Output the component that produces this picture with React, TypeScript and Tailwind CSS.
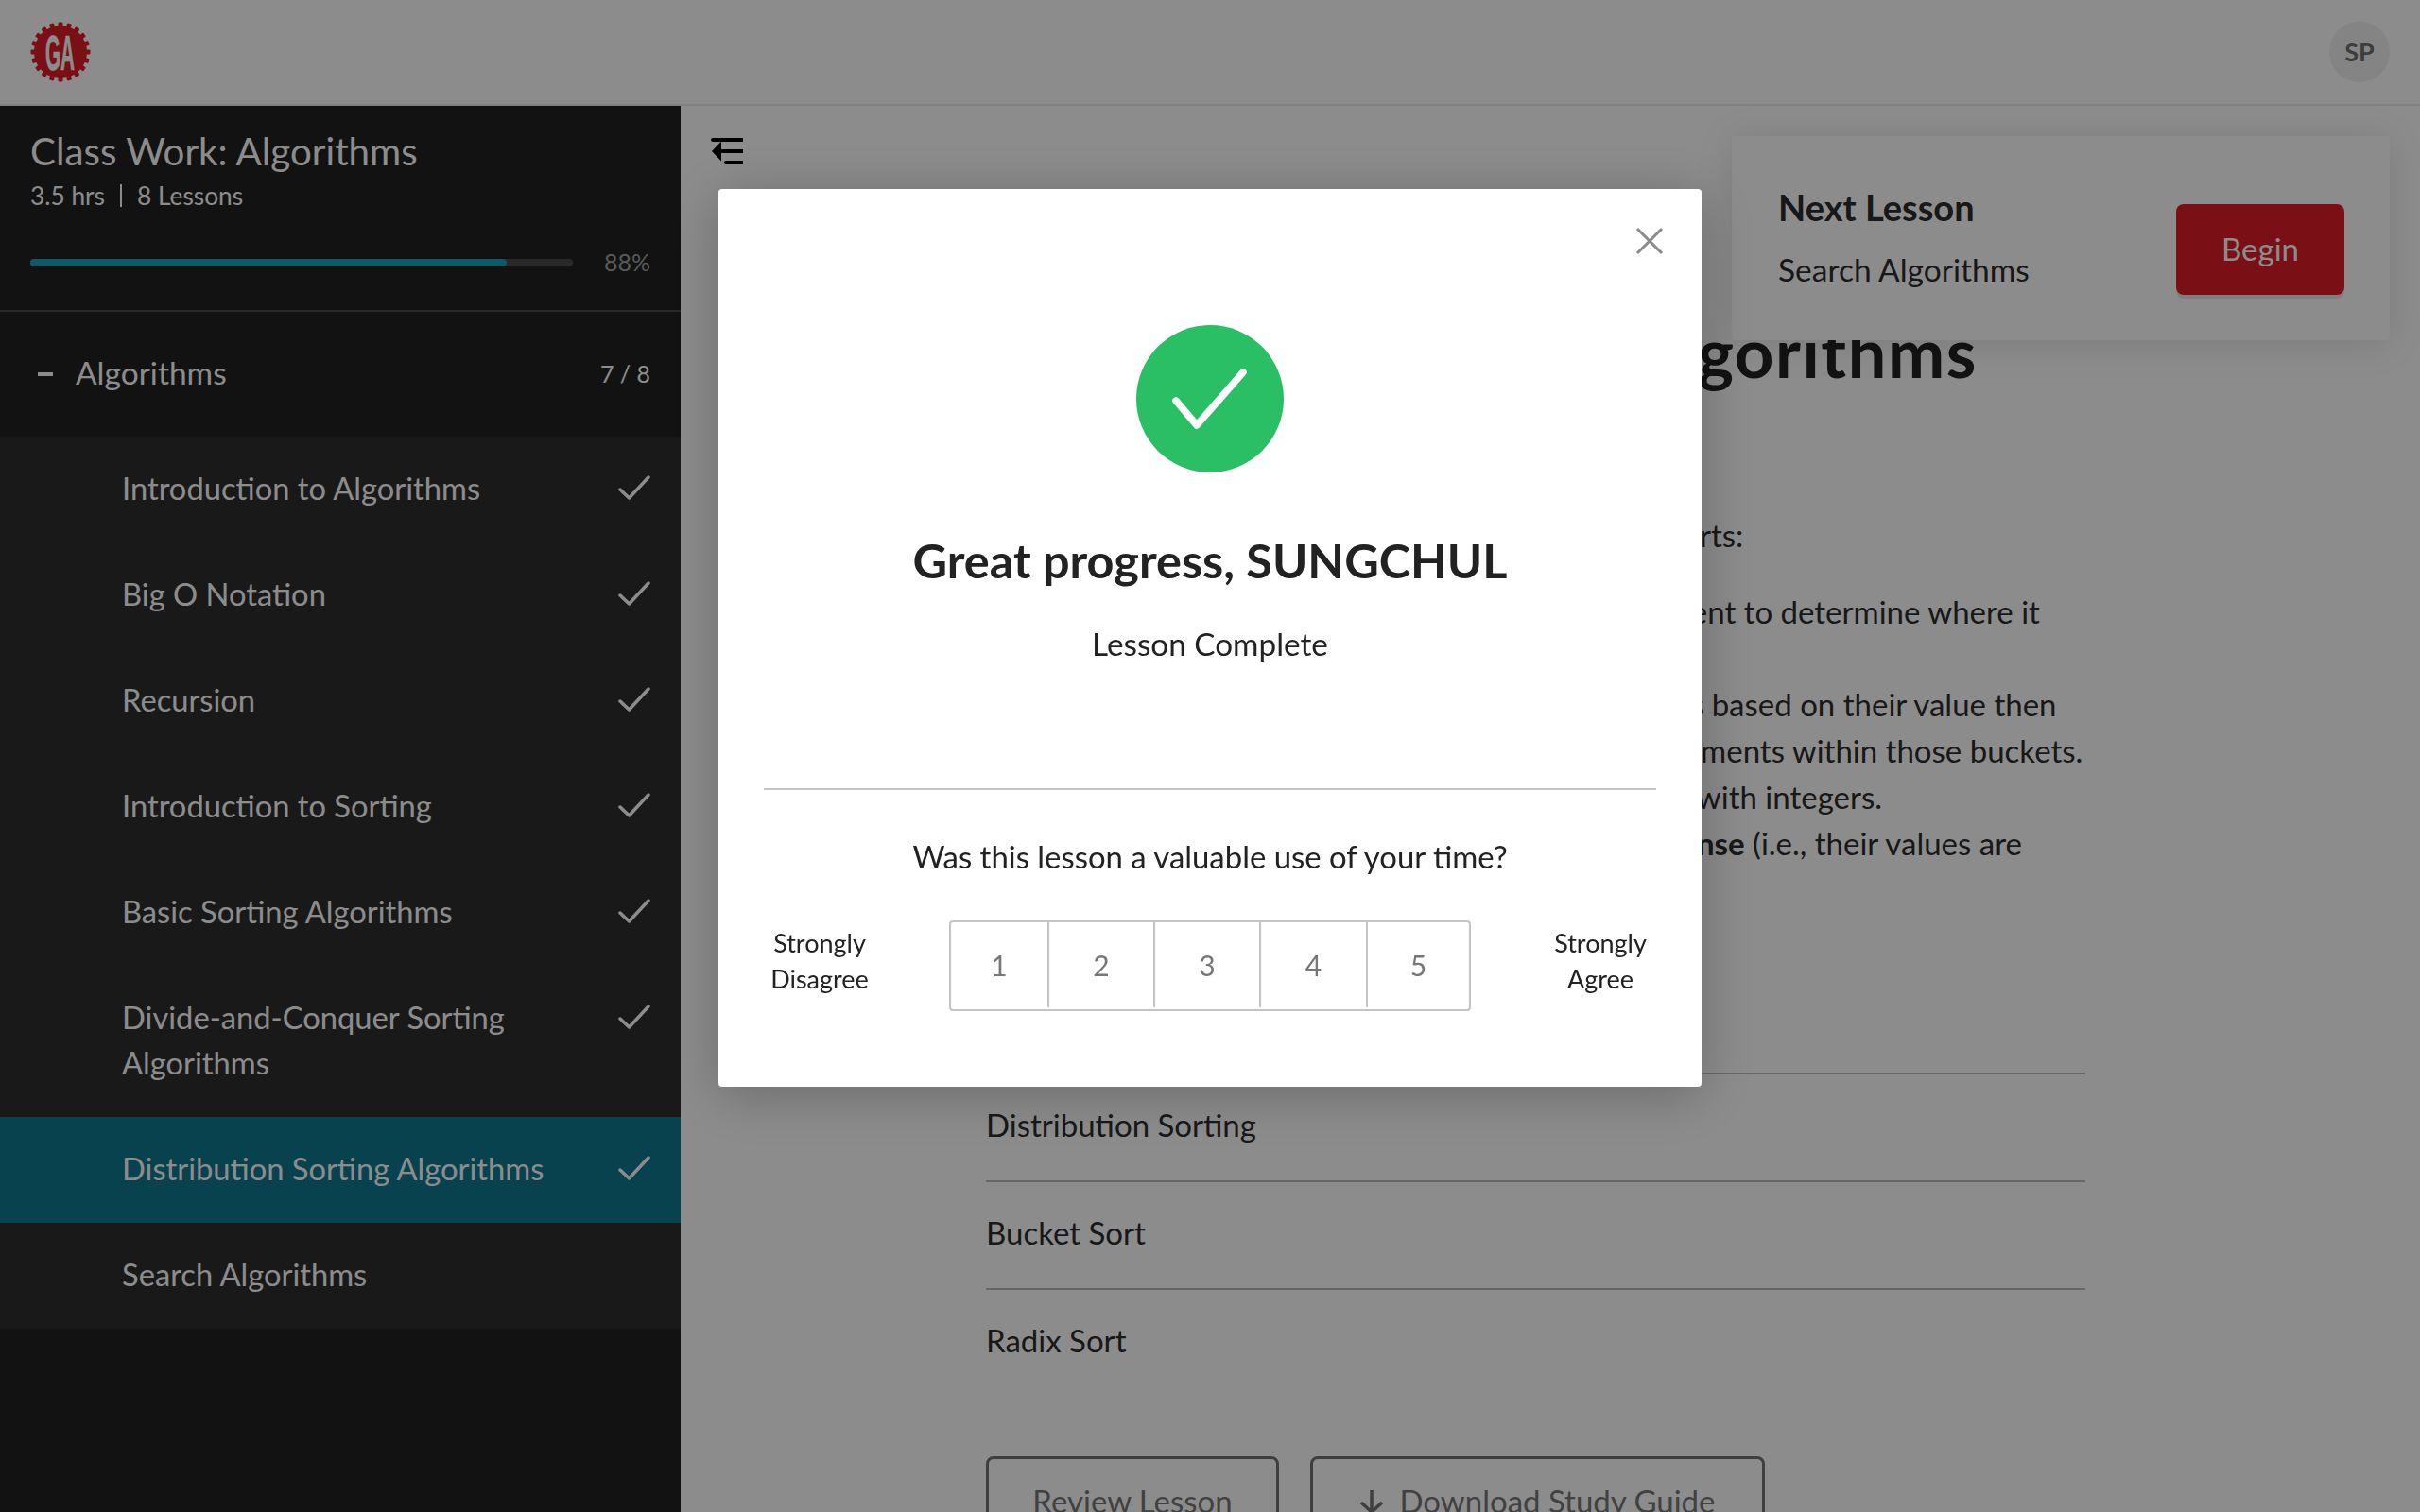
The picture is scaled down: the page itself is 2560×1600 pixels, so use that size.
const LESSONS = [
  { title: ['Introduction to Algorithms'], done: true },
  { title: ['Big O Notation'], done: true },
  { title: ['Recursion'], done: true },
  { title: ['Introduction to Sorting'], done: true },
  { title: ['Basic Sorting Algorithms'], done: true },
  { title: ['Divide-and-Conquer Sorting', 'Algorithms'], done: true },
  { title: ['Distribution Sorting Algorithms'], done: true, active: true },
  { title: ['Search Algorithms'], done: false },
];

function Logo() {
  const teeth = Array.from({ length: 20 }, (_, i) => i * 18);
  return (
    <svg width="64" height="64" viewBox="0 0 64 64" className="ml-8">
      <circle cx="32" cy="32" r="28" fill="#de1d28" />
      {teeth.map((deg) => (
        <rect key={deg} x="29.5" y="0.5" width="5" height="6" rx="1" fill="#de1d28" transform={`rotate(${deg} 32 32)`} />
      ))}
      <text x="16" y="51" textLength="31" lengthAdjust="spacingAndGlyphs" fontFamily="Liberation Sans" fontWeight="700" fontSize="52" fill="#ffffff" stroke="#ffffff" strokeWidth="0.6">GA</text>
    </svg>
  );
}

function Check({ className }: { className?: string }) {
  return (
    <svg width="34" height="26" viewBox="0 0 34 26" fill="none" className={className}>
      <path d="M2 15 L11.5 24 L32 2" stroke="#ffffff" strokeWidth="3.5" strokeLinecap="round" strokeLinejoin="round" />
    </svg>
  );
}

function Sidebar() {
  return (
    <aside className="w-[720px] shrink-0 bg-[#212121] text-white">
      <div className="border-b-2 border-[#4c4c4c] px-8 pb-[34px] pt-6">
        <h2 className="text-[40.3px] leading-[48px]">Class Work: Algorithms</h2>
        <div className="mt-[5px] flex items-center text-[26.3px] leading-[36px]">
          <span>3.5 hrs</span>
          <span className="mx-4 h-6 w-0.5 bg-white" />
          <span>8 Lessons</span>
        </div>
        <div className="mt-[37px] flex h-8 items-center">
          <div className="h-2 w-[574px] rounded-full bg-[#4c4c4c]">
            <div className="h-2 w-[504px] rounded-full bg-[#1ba4bd]" />
          </div>
          <span className="ml-auto text-[25px] text-[#a2a2a2]">88%</span>
        </div>
      </div>
      <div className="flex h-[132px] items-center pl-10 pr-8">
        <span className="h-1 w-4 bg-white" />
        <span className="ml-6 -translate-y-0.5 text-[33.5px]">Algorithms</span>
        <span className="ml-auto text-[25px]">7 / 8</span>
      </div>
      <ul>
        {LESSONS.map((l) => (
          <li key={l.title[0]} className={`flex justify-between py-8 pl-[129px] pr-8 text-[32.7px] leading-[48px] ${l.active ? 'bg-[#0f7890]' : 'bg-[#2f2f2f]'}`}>
            <div className="-translate-y-px">
              {l.title.map((t) => (
                <div key={t}>{t}</div>
              ))}
            </div>
            {l.done && <Check className="mt-[9px]" />}
          </li>
        ))}
      </ul>
    </aside>
  );
}

function Main() {
  return (
    <main className="relative flex-1 overflow-hidden">
      <svg width="34" height="28" viewBox="0 0 34 28" className="ml-[32px] mt-[34px] block">
        <path d="M2 2 H33 M12 14 H33 M16 26 H33" stroke="#000000" strokeWidth="4" strokeLinecap="round" />
        <path d="M1 14 L11 3.5 V24.5 Z" fill="#000000" />
      </svg>
      <div className="absolute left-[1112px] top-8 flex h-[216px] w-[696px] items-center justify-between rounded bg-white pl-[49px] pr-12 shadow-[0_4px_40px_rgba(0,0,0,0.12)]">
        <div>
          <div className="text-[38px] font-bold leading-[48px] text-[#2d2d2d]">Next Lesson</div>
          <div className="mt-[18px] text-[33.5px] leading-[48px] text-[#2d2d2d]">Search Algorithms</div>
        </div>
        <button className="mt-6 h-24 w-[178px] rounded-lg bg-[#de1d28] text-[33px] text-white shadow-[0_4px_0_rgba(0,0,0,0.1)]">Begin</button>
      </div>
      <div className="ml-[323px] w-[1163px] text-[33px] text-[#2d2d2d]">
        <h1 className="mt-[158px] text-[72px] font-bold leading-[80px] tracking-[1.6px] text-[#222222]">Distribution Sorting Algorithms</h1>
        <div className="mt-[130px] leading-[49px]">
          <p>Distribution sorting algorithms are formed of two parts:</p>
          <div className="mt-8 pl-12">
            <p>Distribution: Look at the key value of every element to determine where it</p>
            <p>belongs.</p>
            <p>Collection: Places the elements into their buckets based on their value then</p>
            <p>Then, use a sorting routine to sort all of these elements within those buckets.</p>
            <p>These algorithms are typically used to sort items with integers.</p>
            <p>They work better when values in the array are <b>dense</b> (i.e., their values are</p>
            <p>close together).</p>
          </div>
        </div>
        <ul className="mt-[169px] leading-[48px]">
          <li className="border-t-2 border-[#bbbbbb] pb-[35px] pt-[29px]">Distribution Sorting</li>
          <li className="border-t-2 border-[#bbbbbb] pb-[35px] pt-[29px]">Bucket Sort</li>
          <li className="border-t-2 border-[#bbbbbb] pb-[35px] pt-[29px]">Radix Sort</li>
        </ul>
        <div className="mt-[64px] flex gap-[33px] text-[#777777]">
          <button className="h-24 w-[310px] rounded-lg border-[3px] border-[#747474]">Review Lesson</button>
          <button className="flex h-24 w-[481px] items-center justify-center gap-4 rounded-lg border-[3px] border-[#747474]">
            <svg width="26" height="26" viewBox="0 0 26 26" fill="none">
              <path d="M13 1 V24 M2 14 L13 24 L24 14" stroke="#747474" strokeWidth="3.5" />
            </svg>
            Download Study Guide
          </button>
        </div>
      </div>
    </main>
  );
}

function Rating() {
  const cells = [
    { n: 1, w: 'w-[102px]' },
    { n: 2, w: 'w-[112px]' },
    { n: 3, w: 'w-[112px]' },
    { n: 4, w: 'w-[113px]' },
    { n: 5, w: 'w-[109px]' },
  ];
  return (
    <div className="mt-[43px] flex w-full items-center px-[32px]">
      <div className="ml-2 w-[134px] -translate-y-[5px] text-center text-[27px] leading-[38px] text-[#222222]">Strongly<br />Disagree</div>
      <div className="ml-[70px] flex h-[96px] rounded border-2 border-[#c4c4c4] pb-0.5 text-[30px] text-[#777777]">
        {cells.map((c) => (
          <div key={c.n} className={`flex items-center justify-center border-l-2 border-[#c4c4c4] first:border-l-0 ${c.w}`}>{c.n}</div>
        ))}
      </div>
      <div className="ml-[70px] w-[134px] -translate-y-[5px] text-center text-[27px] leading-[38px] text-[#222222]">Strongly<br />Agree</div>
    </div>
  );
}

function Modal() {
  return (
    <div className="fixed inset-0 flex justify-center bg-black/45 pt-[200px]">
      <div className="relative flex h-[950px] w-[1040px] flex-col items-center rounded bg-white pt-[144px] text-[#222222] shadow-[0_8px_60px_rgba(0,0,0,0.25)]">
        <svg width="30" height="30" viewBox="0 0 30 30" fill="none" className="absolute right-[40px] top-[40px]">
          <path d="M2 2 L28 28 M28 2 L2 28" stroke="#8c8c8c" strokeWidth="3" />
        </svg>
        <div className="flex h-[156px] w-[156px] items-center justify-center rounded-full bg-[#2abf64]">
          <svg width="84" height="68" viewBox="0 0 84 68" fill="none">
            <path d="M6 36 L28 62 L77 6" stroke="#ffffff" strokeWidth="7.5" strokeLinecap="round" strokeLinejoin="round" />
          </svg>
        </div>
        <h1 className="mt-[63px] text-[50.4px] font-bold leading-[60px]">Great progress, SUNGCHUL</h1>
        <p className="mt-[34px] text-[33.3px] leading-[48px]">Lesson Complete</p>
        <div className="mt-[129px] h-0.5 w-[944px] bg-[#c4c4c4]" />
        <p className="mt-[47px] text-[32.9px] leading-[48px]">Was this lesson a valuable use of your time?</p>
        <Rating />
      </div>
    </div>
  );
}

export default function App() {
  return (
    <div className="flex h-screen flex-col overflow-hidden bg-white font-['Lato',sans-serif]">
      <header className="flex h-[112px] shrink-0 items-center justify-between border-b-2 border-[#ececec] pr-8">
        <Logo />
        <div className="flex h-16 w-16 items-center justify-center rounded-full bg-[#f0f0f0] text-[27px] font-bold text-[#707070]">SP</div>
      </header>
      <div className="flex min-h-0 flex-1">
        <Sidebar />
        <Main />
      </div>
      <Modal />
    </div>
  );
}
